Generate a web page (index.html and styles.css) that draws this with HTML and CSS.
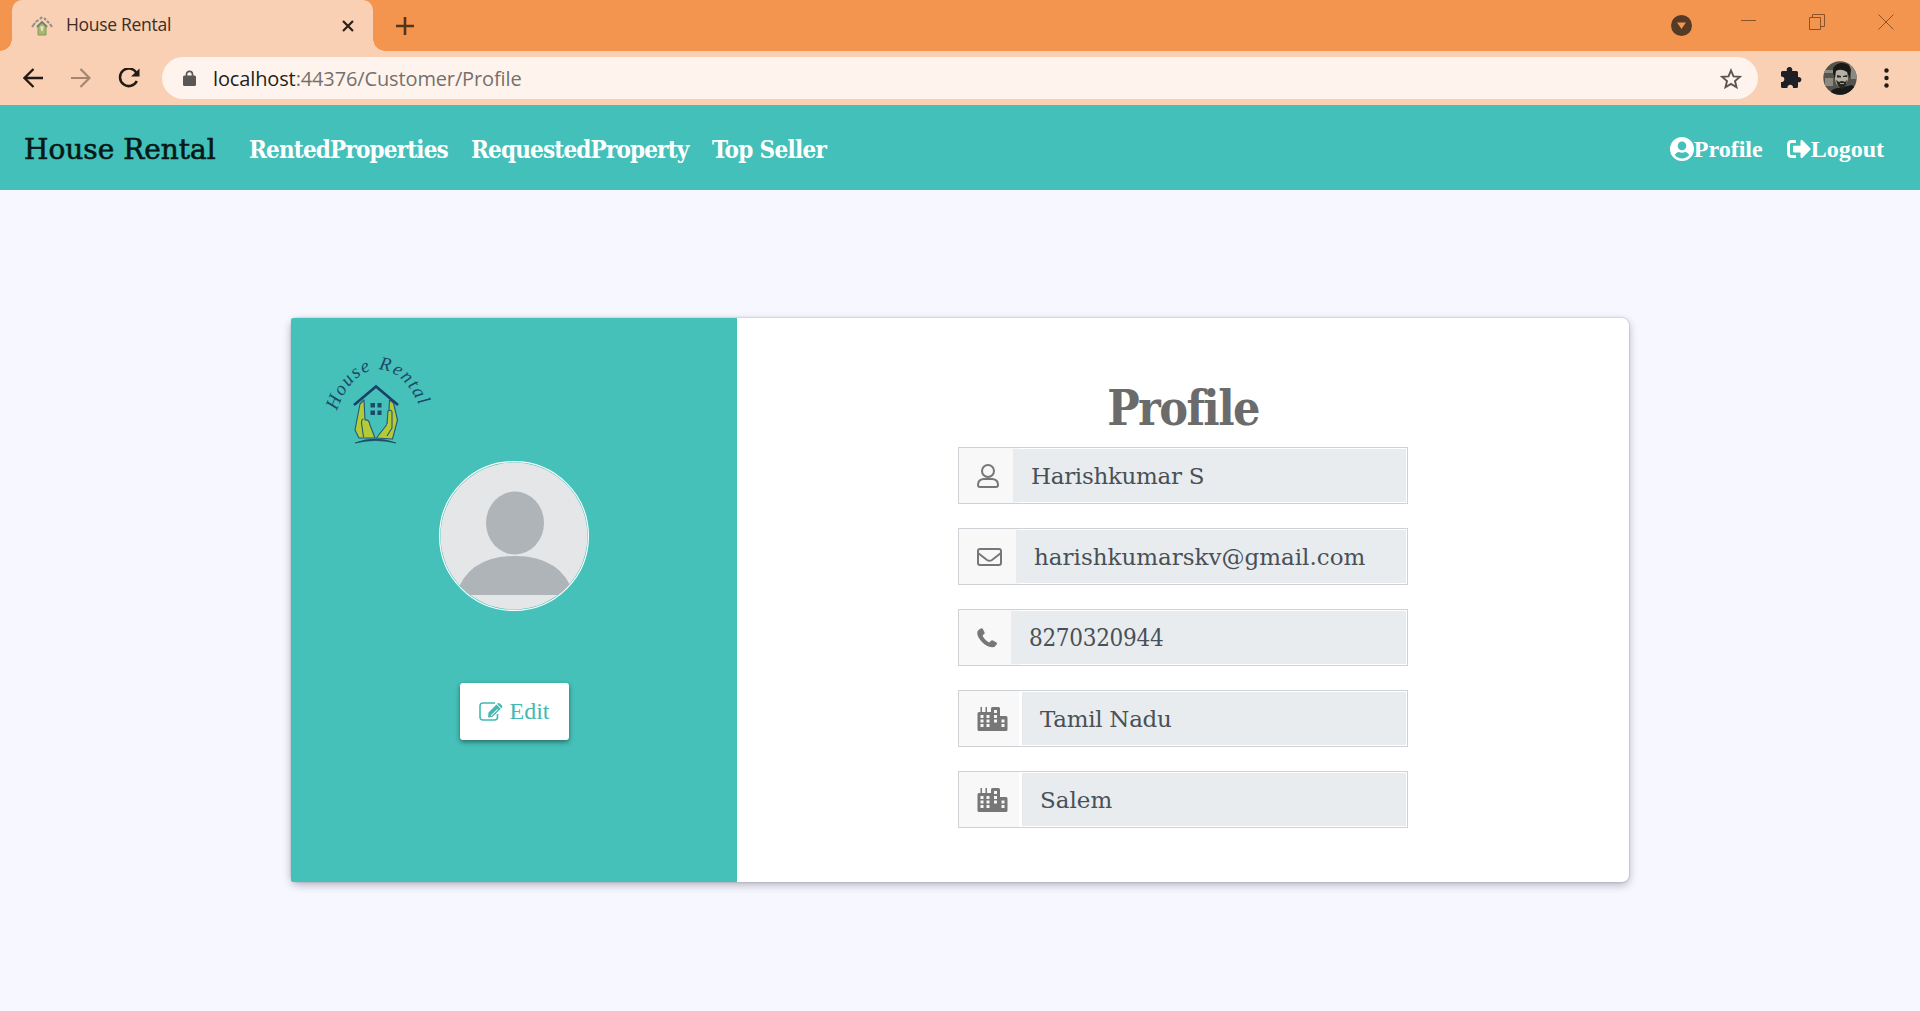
FILE: index.html
```html
<!DOCTYPE html>
<html lang="en">
<head>
<meta charset="utf-8">
<title>House Rental</title>
<link rel="stylesheet" href="styles.css">
</head>
<body>
<svg class="defs" width="0" height="0" aria-hidden="true">
  <symbol id="city" viewBox="0 0 30 24">
    <path fill-rule="evenodd" d="M3 0h1.500v5H8V0h1.500v5H13.500V1.500Q13.500 0 15 0h6q1.500 0 1.500 1.500V9h6q1.500 0 1.500 1.500v12q0 1.500-1.500 1.500h-27Q0 24 0 22.500V6.500Q0 5 1.500 5H3zM3 8v3h3V8zM9 8v3h3V8zM3 12.500v3h3v-3zM9 12.500v3h3v-3zM3 17v3h3v-3zM9 17v3h3v-3zM16.500 3v3h3V3zM16.500 8v3h3V8zM16.500 12.500v3h3v-3zM24 12.500v3h3v-3zM24 17v3h3v-3z"/>
  </symbol>
</svg>

<header class="browser">
  <div class="tabstrip">
    <div class="tab">
      <svg class="favicon" viewBox="0 0 22 20" width="22" height="20"><path d="M1 11l3-4M4.500 6l3-2M9 3l2-2M13 2l2 2M16 5l2 2M19 8l2 3" stroke="#8d8f8a" stroke-width="2" fill="none"/><path d="M6 11l5-5 5 5" stroke="#6c7d70" stroke-width="1.800" fill="none"/><path d="M7 11v8h8v-8l-4-4z" fill="#a9b862" stroke="#7c9a72"/><path d="M9.500 10h3v3l-1.500 3-1.500-3z" fill="#e9dfc0"/></svg>
      <span class="tab-title">House Rental</span>
      <svg class="tab-close" width="12" height="12" viewBox="0 0 12 12"><path d="M1 1l10 10M11 1L1 11" stroke="#2b2019" stroke-width="2.200"/></svg>
    </div>
    <svg class="new-tab" width="18" height="18" viewBox="0 0 18 18"><path d="M9 0v18M0 9h18" stroke="#553419" stroke-width="2.600"/></svg>
    <div class="window-buttons">
      <svg width="21" height="21" viewBox="0 0 21 21"><circle cx="10.500" cy="10.500" r="10.500" fill="#553a25"/><path d="M6 7.500h9L10.500 14z" fill="#f3954f"/></svg>
      <svg class="minimise" width="16" height="16" viewBox="0 0 16 16"><path d="M0 7.500h15" stroke="#8a532a"/></svg>
      <svg class="restore" width="16" height="16" viewBox="0 0 16 16"><path d="M.5 3.500h11v12H.5zM3.500 3.500v-3h12v12h-4" stroke="#8a532a" fill="none"/></svg>
      <svg class="close" width="16" height="16" viewBox="0 0 16 16"><path d="M.5.5l15 15M15.500.5l-15 15" stroke="#8a532a"/></svg>
    </div>
  </div>
  <div class="toolbar">
    <svg class="back" width="20" height="20" viewBox="0 0 20 20"><path d="M20 10H1.500M10.500 1L1.500 10l9 9" stroke="#221a14" stroke-width="2.300" fill="none"/></svg>
    <svg class="forward" width="20" height="20" viewBox="0 0 20 20"><path d="M0 10h18.500M9.500 1l9 9-9 9" stroke="#a28572" stroke-width="2.200" fill="none"/></svg>
    <svg class="reload" width="22" height="20" viewBox="0 0 22 20"><path d="M18.500 5A8.800 8.800 0 1 0 18.800 13" stroke="#221a14" stroke-width="2.500" fill="none"/><path d="M21.500.5v8H13z" fill="#221a14"/></svg>
    <div class="omnibox">
      <svg class="lock" width="13" height="16" viewBox="0 0 13 16"><path d="M3.500 7V4.300a3 3 0 0 1 6 0V7" stroke="#5b5755" stroke-width="1.700" fill="none"/><rect y="5.500" width="13" height="10.500" rx="1.500" fill="#5b5755"/></svg>
      <span class="url"><b>localhost</b>:44376/Customer/Profile</span>
      <svg class="star" width="22" height="21" viewBox="0 0 22 21"><path d="M11 2.500l2.500 5.900 6.300.5-4.800 4.100 1.500 6.200-5.500-3.300-5.500 3.300L7 13 2.200 8.900l6.300-.5z" stroke="#5b5450" stroke-width="1.900" fill="none"/></svg>
    </div>
    <svg class="puzzle" width="22" height="22" viewBox="0 0 22 22"><path fill="#1d2125" d="M2.500 4H7a2.800 2.800 0 1 1 5 0h4.500q1.500 0 1.500 1.500V10a2.700 2.700 0 1 1 0 5.200v4.300q0 1.500-1.500 1.500H13a2.800 2.800 0 1 0-5.500 0H2.500Q1 21 1 19.500V15a2.800 2.800 0 1 0 0-5.500v-4Q1 4 2.500 4z"/></svg>
    <svg class="account" width="34" height="34" viewBox="0 0 34 34"><clipPath id="round"><circle cx="17" cy="17" r="16.700"/></clipPath><g clip-path="url(#round)"><path fill="#55534c" d="M0 0h34v34H0z"/><path fill="#8c8a80" d="M0 9h10v3H0zM2 17h8v8H2zM26 4h8v14h-6z"/><path fill="#191a18" d="M6 34q3-8 11-7l12-3q5 3 5 10zM10 12Q9 4 17 2q10-1 11 7l-1 8-3-6-11-1-1 8z"/><path fill="#b5b0a5" d="M13 10q5-3 11 1l1 7q-2 8-6 9-6-1-7-9z"/><path fill="#282724" d="M14 14l4 1v1.500h-4zM20 15l4-1v2h-4zM13 19l3 2q3-2 6 0l2-2q-1 8-5 9-4-1-6-9z"/><path fill="#a59d90" d="M17 22h4v1h-4z"/></g></svg>
    <svg class="menu" width="5" height="20" viewBox="0 0 5 20"><g fill="#221a14"><circle cx="2.500" cy="2.500" r="2.200"/><circle cx="2.500" cy="10" r="2.200"/><circle cx="2.500" cy="17.500" r="2.200"/></g></svg>
  </div>
</header>

<nav class="navbar">
  <a class="brand">House Rental</a>
  <a class="link rented">RentedProperties</a>
  <a class="link requested">RequestedProperty</a>
  <a class="link seller">Top Seller</a>
  <div class="session">
    <a><svg width="24" height="24" viewBox="0 0 24 24"><path fill="#fff" fill-rule="evenodd" d="M12 0a12 12 0 1 0 0 24 12 12 0 0 0 0-24zm0 4.600a4.300 4.300 0 1 1 0 8.600 4.300 4.300 0 0 1 0-8.600zm0 16.800a9.200 9.200 0 0 1-7.200-3.400c1-1.800 2.600-2.900 4.200-2.900q3 1.200 6 0c1.600 0 3.200 1.100 4.200 2.900a9.200 9.200 0 0 1-7.200 3.400z"/></svg>Profile</a>
    <a><svg width="24" height="24" viewBox="0 0 512 512"><path fill="#fff" d="M497 273L329 441c-15 15-41 4.500-41-17v-96H152c-13.300 0-24-10.700-24-24v-96c0-13.300 10.700-24 24-24h136V88c0-21.400 25.900-32 41-17l168 168c9.300 9.400 9.300 24.600 0 34zM192 436v-40c0-6.600-5.400-12-12-12H96c-17.700 0-32-14.300-32-32V160c0-17.700 14.300-32 32-32h84c6.600 0 12-5.400 12-12V76c0-6.600-5.400-12-12-12H96c-53 0-96 43-96 96v192c0 53 43 96 96 96h84c6.600 0 12-5.400 12-12z"/></svg>Logout</a>
  </div>
</nav>

<main class="card">
  <aside class="side">
    <svg class="logo" width="115" height="105" viewBox="0 0 115 105">
      <path id="arc" d="M17 66C27 36 44 24.500 58 24.500S90 34 102 68" fill="none"/>
      <text class="logo-text"><textPath href="#arc" textLength="120">House Rental</textPath></text>
      <g stroke="#24577d" stroke-width="1.100" fill="#b4cb35" stroke-linejoin="round">
        <path d="M40 59l4-4 1 20q4-1 5 5l5 13H39l-4-8z"/>
        <path d="M69.500 55l4 3 4 17-5 19-16-1 10-13 2-4z"/>
        <path d="M43.500 92l-2-14q0-4 2-4M67 91l5-8V67q-1-3-4-1l-1 13"/>
      </g>
      <path d="M34 60l22-18.500L78 60" fill="none" stroke="#1b4168" stroke-width="2.600"/>
      <path d="M50.500 58h4.500v4.500h-4.500zM57.500 58h4v4.500h-4zM50.500 65.500h4.500V70h-4.500zM57.500 65.500h4V70h-4z" fill="#1b4a6b"/>
      <path d="M35 98q20-8 41 0-20-5-41 0z" fill="#1d4b60" stroke="#1d4b60" stroke-width=".7"/>
    </svg>
    <svg class="avatar" width="150" height="150" viewBox="0 0 150 150">
      <clipPath id="face"><circle cx="75" cy="75" r="73.500"/></clipPath>
      <circle cx="75" cy="75" r="74.400" fill="#45c1b9" stroke="#fff" stroke-width="1.200"/>
      <g clip-path="url(#face)"><path fill="#e4e6e8" d="M0 0h150v150H0z"/><path fill="#aeb4b8" d="M17 134q12-39 59-39t59 39z"/><ellipse cx="76" cy="62" rx="29" ry="31.500" fill="#aeb4b8"/></g>
    </svg>
    <button class="edit"><svg width="24" height="20" viewBox="0 0 24 20"><path d="M16 1H4Q1 1 1 4v11q0 3 3 3h11.500q3 0 3-3v-3" fill="none" stroke="#45b8b2" stroke-width="1.600"/><path fill-rule="evenodd" fill="#45b8b2" d="M9 15.500l.5-5L17.500 2.500l4.200 4.200-8 8zM11 12.500l1.500 1.500 6.500-6.500-.6-.6-6.500 6.300zM18.500 1.500q1.200-1.200 2.400 0l2 2q1.100 1.200 0 2.300l-.5.500-4.200-4.300z"/></svg>Edit</button>
  </aside>
  <section class="details">
    <h1>Profile</h1>
    <div class="field"><svg width="22" height="24" viewBox="0 0 22 24"><g fill="none" stroke="#777" stroke-width="2"><circle cx="11" cy="7" r="6"/><path d="M6.500 15h9q5.500.5 5.500 6 0 2-2 2H3q-2 0-2-2 0-5.500 5.500-6z"/></g></svg><span class="value name">Harishkumar S</span></div>
    <div class="field"><svg width="25" height="18" viewBox="0 0 25 18"><g fill="none" stroke="#777" stroke-width="2"><rect x="1" y="1" width="23" height="16" rx="2"/><path d="M1 5l9 7q2.500 1.500 5 0l9-7"/></g></svg><span class="value mail">harishkumarskv@gmail.com</span></div>
    <div class="field"><svg width="20" height="20" viewBox="0 0 20 20"><path fill="#777" d="M4 .5q1.300-.8 2 .7l1.500 3q.5 1.200-.5 2L5.500 7.500q2 4.500 6.800 7l1.700-1.700q.8-.8 2-.2l3 1.700q1.500.8.8 2Q18 19.500 15 19.300 9 18.500 4.500 13.500T.3 4.500Q.5 2 4 .5z"/></svg><span class="value phone">8270320944</span></div>
    <div class="field"><svg class="city" width="31" height="24"><use href="#city"/></svg><span class="value state">Tamil Nadu</span></div>
    <div class="field"><svg class="city" width="31" height="24"><use href="#city"/></svg><span class="value town">Salem</span></div>
  </section>
</main>
</body>
</html>
```
FILE: styles.css
```css
* { box-sizing: border-box; }
body { margin: 0; height: 1011px; overflow: hidden; background: #f7f7ff; font-family: "Roboto Slab", "DejaVu Serif Condensed", "DejaVu Serif", serif; }
svg { display: block; flex: none; }
.defs { position: absolute; }

.browser { height: 106px; background: #f9d0b4; border-bottom: 1px solid #a89a80; font-family: "Segoe UI", "Open Sans", sans-serif; }
.tabstrip { display: flex; align-items: center; height: 51px; padding-left: 12px; background: #f3954f; }
.tab { position: relative; display: flex; align-items: center; width: 361px; height: 51px; padding: 0 19px; border-radius: 10px 10px 0 0; background: #f9d0b4; }
.tab::before, .tab::after { content: ""; position: absolute; bottom: 0; width: 12px; height: 12px; }
.tab::before { left: -12px; background: radial-gradient(circle at 0 0, #f3954f 11.5px, #f9d0b4 12px); }
.tab::after { right: -12px; background: radial-gradient(circle at 100% 0, #f3954f 11.5px, #f9d0b4 12px); }
.tab-title { margin: -3px 0 0 13px; font-size: 17.5px; letter-spacing: -.3px; color: #3b2e25; line-height: 24px; }
.tab-close { margin-left: auto; }
.new-tab { margin-left: 23px; }
.window-buttons { display: flex; align-items: center; margin-left: auto; padding-right: 26px; }
.minimise { margin: -9px 0 0 49px; }
.restore { margin: -8px 0 0 52px; }
.close { margin: -8px 0 0 53px; }

.toolbar { display: flex; align-items: center; height: 54px; padding: 0 31px 0 23px; }
.forward { margin-left: 28px; }
.reload { margin-left: 27px; }
.omnibox { display: flex; align-items: center; width: 1596px; height: 42px; margin-left: 22px; padding: 0 16px 0 21px; border-radius: 21px; background: #fef4ed; }
.url { margin-left: 17px; font-size: 20px; letter-spacing: -.13px; color: #76706c; }
.url b { font-weight: 400; color: #241e1a; }
.star { margin-left: auto; }
.puzzle { margin-left: 22px; }
.account { margin-left: 21px; }
.menu { margin-left: auto; }

.navbar { display: flex; align-items: center; height: 84px; padding: 2px 36px 0 24px; background: #44c0ba; }
.brand { width: 225px; font-family: "Roboto Slab", "DejaVu Serif", serif; font-size: 28px; color: #071816; -webkit-text-stroke: .6px #071816; white-space: nowrap; }
.link { font-size: 24px; font-weight: 700; letter-spacing: -.85px; color: #fff; white-space: nowrap; }
.rented { width: 222px; }
.requested { width: 241px; }
.seller { letter-spacing: -.7px; }
.session { display: flex; gap: 24px; margin-left: auto; font: 700 24px/28px "Liberation Serif", serif; color: #fff; }
.session a { display: flex; align-items: center; }

.card { display: flex; width: 1338px; height: 564px; margin: 128px auto 0; border-radius: 7px; background: #fff; box-shadow: 0 3px 9px rgba(30, 30, 60, .3), 0 0 2px rgba(30, 30, 60, .3); }
.side { display: flex; flex-direction: column; align-items: center; width: 446px; background: #45c1b9; border-radius: 2px 0 0 2px; }
.logo { align-self: flex-start; margin: 27px 0 0 29px; overflow: visible; }
.logo-text { font: italic 19px "Liberation Serif", serif; fill: #1d4968; }
.avatar { margin-top: 11px; }
.edit { display: flex; align-items: center; width: 109px; height: 57px; margin-top: 72px; padding: 0 0 0 19px; gap: 7px; border: 0; border-radius: 3px; background: #fff; color: #45b8b2; font: 24px "Liberation Serif", serif; box-shadow: 0 2px 5px rgba(0, 0, 0, .45); }

.details { display: flex; flex-direction: column; align-items: center; flex: 1; padding-top: 60px; }
h1 { margin: 0 0 9px; font-size: 48px; line-height: 60px; letter-spacing: -1.6px; color: #6b6b6b; }
.field { display: flex; align-items: center; width: 450px; height: 57px; margin-bottom: 24px; padding: 1px 1px 1px 18px; border: 1px solid #ced2d6; background: linear-gradient(90deg, #f8f8f8 60px, #fff 60px); }
.value { flex: 1; display: flex; align-items: center; height: 53px; margin-left: 14px; padding: 1px 0 0 18px; background: #e8ecef; font-family: "Roboto Slab", "DejaVu Serif", serif; font-size: 23px; color: #495057; white-space: nowrap; }
.name { letter-spacing: -.3px; }
.phone { font-family: "Roboto Slab", "DejaVu Serif Condensed", serif; font-size: 24px; letter-spacing: -.3px; }
.state { letter-spacing: -.3px; }
.city { fill: #777; }
```
